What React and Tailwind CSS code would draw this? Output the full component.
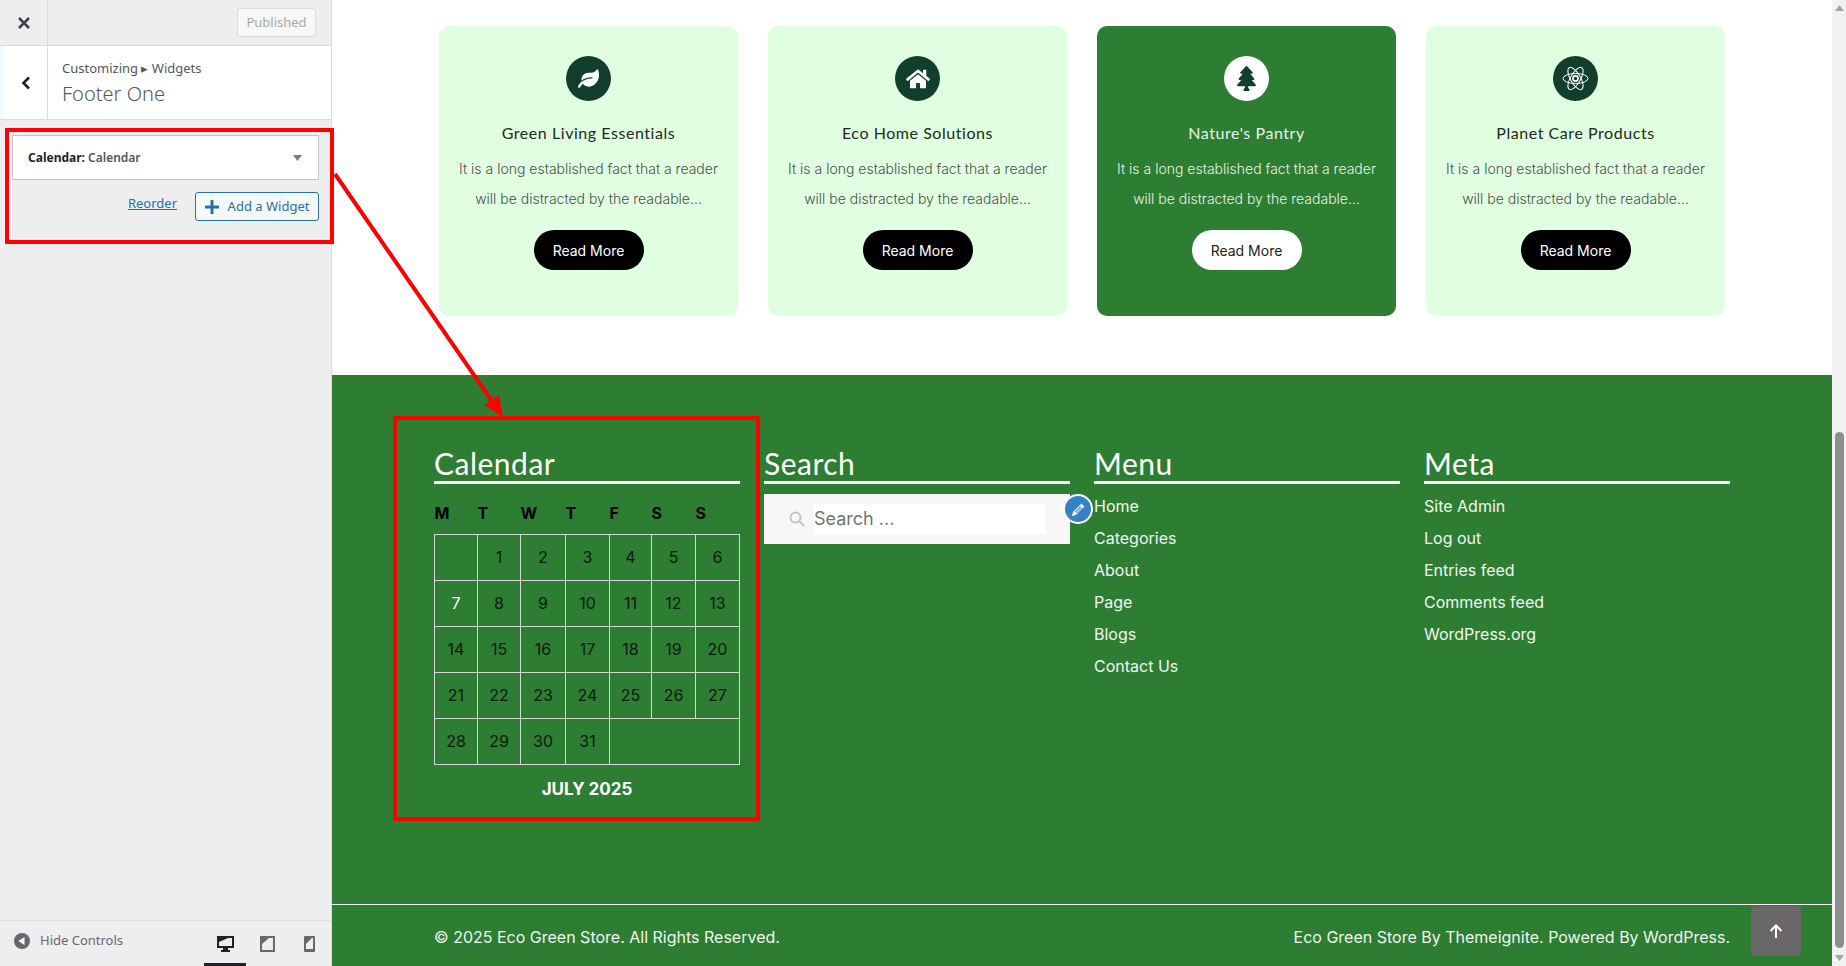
import React from "react";
import { FaLeaf, FaHome, FaTree } from "react-icons/fa";

const cards = [
  { title: "Green Living Essentials", icon: <FaLeaf className="text-white text-[21px]" /> },
  { title: "Eco Home Solutions", icon: <FaHome className="text-white text-[24px]" /> },
  { title: "Nature's Pantry", dark: true, icon: <FaTree className="text-[#123f2d] text-[25px]" /> },
  {
    title: "Planet Care Products",
    icon: (
      <svg width="27" height="27" viewBox="0 0 27 27" fill="none" stroke="white" strokeWidth="1">
        <ellipse cx="13.5" cy="13.5" rx="12.5" ry="5" />
        <ellipse cx="13.5" cy="13.5" rx="12.5" ry="5" transform="rotate(60 13.5 13.5)" />
        <ellipse cx="13.5" cy="13.5" rx="12.5" ry="5" transform="rotate(120 13.5 13.5)" />
        <circle cx="13.5" cy="13.5" r="2.6" strokeWidth="1.6" />
      </svg>
    ),
  },
];

const weeks = [
  [null, 1, 2, 3, 4, 5, 6],
  [7, 8, 9, 10, 11, 12, 13],
  [14, 15, 16, 17, 18, 19, 20],
  [21, 22, 23, 24, 25, 26, 27],
];
const colWidths = [43, 43, 45, 44, 42, 44, 44];
const dayNames = ["M", "T", "W", "T", "F", "S", "S"];

function Card({ title, icon, dark }) {
  return (
    <div className={`w-[299px] h-[290px] rounded-[10px] pt-[30px] flex flex-col items-center ${dark ? "bg-[#2d7d32]" : "bg-[#e0ffe0]"}`}>
      <div className={`w-[45px] h-[45px] rounded-full flex items-center justify-center ${dark ? "bg-white" : "bg-[#123f2d]"}`}>{icon}</div>
      <h3 className={`mt-[21px] text-[16px] leading-[22px] tracking-[0.55px] font-['Lato',sans-serif] ${dark ? "text-[#e6f5e6]" : "text-[#1d2a20]"}`}>{title}</h3>
      <p className={`mt-[10px] text-center text-[14px] leading-[30px] font-light ${dark ? "text-[#e6f5e6]" : "text-[#4a4f4b]"}`}>
        It is a long established fact that a reader
        <br />
        will be distracted by the readable...
      </p>
      <a className={`mt-[16px] w-[110px] h-[40px] rounded-full flex items-center justify-center text-[14px] ${dark ? "bg-white text-[#222]" : "bg-black text-white"}`}>Read More</a>
    </div>
  );
}

function WidgetTitle({ children }) {
  return (
    <h2 className="h-[39px] leading-[36px] border-b-[3px] border-white text-[30px] tracking-[0.5px] text-white font-['Lato',sans-serif] font-normal">{children}</h2>
  );
}

function LinkList({ items }) {
  return (
    <ul className="mt-[6px]">
      {items.map((t) => (
        <li key={t} className="h-[32px] leading-[32px] text-[16px] text-[#f1f7f1]">{t}</li>
      ))}
    </ul>
  );
}

function Sidebar() {
  return (
    <aside className="relative z-10 w-[332px] shrink-0 h-full flex flex-col bg-[#eeeeee] border-r border-[#dcdcde] font-['Noto_Sans',sans-serif]">
      <div className="h-[46px] flex items-stretch border-b border-[#dcdcde]">
        <div className="w-[48px] border-r border-[#dcdcde] flex items-center justify-center">
          <svg width="12" height="12" viewBox="0 0 12 12" stroke="#3c434a" strokeWidth="2.6">
            <path d="M1 1l10 10M11 1L1 11" />
          </svg>
        </div>
        <div className="flex-1 flex items-center justify-end pr-[15px]">
          <div className="w-[79px] h-[29px] border border-[#dcdcde] rounded-[3px] bg-[#f6f7f7] text-[#a7aaad] text-[13px] flex items-center justify-center">Published</div>
        </div>
      </div>
      <div className="h-[74px] flex bg-white border-b border-[#dcdcde]">
        <div className="w-[48px] border-r border-[#dcdcde] border-l-[4px] border-l-[#f0f9ff] flex items-center justify-center">
          <svg width="10" height="14" viewBox="0 0 10 14" fill="none" stroke="#1d2327" strokeWidth="2.6">
            <path d="M8 1.5L2.5 7 8 12.5" />
          </svg>
        </div>
        <div className="pl-[14px] pt-[12px]">
          <div className="text-[13px] leading-[20px] text-[#50575e]">Customizing ▸ Widgets</div>
          <div className="mt-[2px] text-[20px] leading-[28px] font-light text-[#50575e]">Footer One</div>
        </div>
      </div>
      <div className="mt-[8px] ml-[5px] w-[329px] h-[116px] border-[4px] border-[#ff0000] pt-[3px] pl-[3px]">
        <div className="w-[307px] h-[45px] bg-white border border-[#c3c4c7] flex items-center justify-between pl-[15px] pr-[16px] text-[12px]">
          <span className="text-[#50575e] font-semibold">
            <span className="text-[#1d2327] font-bold">Calendar:</span> Calendar
          </span>
          <svg width="9" height="6" viewBox="0 0 9 6" fill="#787c82"><path d="M0 0h9L4.5 6z" /></svg>
        </div>
        <div className="w-[307px] mt-[12px] flex justify-end items-start gap-[18px]">
          <a className="mt-[1px] text-[13px] leading-[20px] text-[#2271b1] underline">Reorder</a>
          <div className="w-[124px] h-[29px] rounded-[3px] border border-[#2271b1] bg-[#f6f7f7] text-[#2271b1] text-[13px] flex items-center justify-center gap-[9px]">
            <svg width="14" height="14" viewBox="0 0 14 14" fill="#2271b1"><path d="M5.5 0h3v5.5H14v3H8.500V14h-3V8.500H0v-3h5.500z" /></svg>
            Add a Widget
          </div>
        </div>
      </div>
      <div className="mt-auto h-[46px] border-t border-[#dcdcde] flex items-start">
        <div className="flex items-center pl-[14px] pt-[10px] gap-[10px] text-[13px] text-[#646970]">
          <svg width="16" height="16" viewBox="0 0 16 16"><circle cx="8" cy="8" r="8" fill="#646970" /><path d="M10.500 4v8L4.500 8z" fill="white" /></svg>
          Hide Controls
        </div>
        <div className="ml-auto mr-[1px] flex">
          <div className="w-[42px] h-[45px] border-b-[3px] border-[#1d2327] flex items-center justify-center pt-[3px]">
            <svg width="17" height="16" viewBox="0 0 17 16" fill="#1d2327">
              <path fillRule="evenodd" d="M0 0h17v12h-6v2h2v2H4v-2h2v-2H0zM2 2v8h13V2z" />
              <path d="M2 2h9L2 6z" />
            </svg>
          </div>
          <div className="w-[42px] h-[45px] flex items-center justify-center">
            <svg width="15" height="16" viewBox="0 0 15 16" fill="#646970">
              <path fillRule="evenodd" d="M0 0h15v16H0zM2 2v12h11V2z" />
              <path d="M2 2h7L2 8z" />
            </svg>
          </div>
          <div className="w-[42px] h-[45px] flex items-center justify-center">
            <svg width="11" height="16" viewBox="0 0 11 16" fill="#646970">
              <path fillRule="evenodd" d="M1 0h9a1 1 0 011 1v14a1 1 0 01-1 1H1a1 1 0 01-1-1V1a1 1 0 011-1zM2 2v11h7V2z" />
              <path d="M2 2h6L2 8z" />
            </svg>
          </div>
        </div>
      </div>
    </aside>
  );
}

function CalendarWidget() {
  return (
    <div className="relative w-[306px]">
      <div className="absolute left-[-41px] top-[-29px] w-[367px] h-[405px] border-[4px] border-[#ff0000] pointer-events-none"></div>
      <WidgetTitle>Calendar</WidgetTitle>
      <table className="mt-[14px] w-[306px] table-fixed border-collapse text-[16px] text-[#0b1a0e]">
        <thead>
          <tr className="h-[36px]">
            {dayNames.map((d, i) => (
              <th key={i} style={{ width: colWidths[i] }} className="p-0 pb-[6px] text-left font-bold text-[16px] text-black">{d}</th>
            ))}
          </tr>
        </thead>
        <tbody>
          {weeks.map((w, i) => (
            <tr key={i} className="h-[46px]">
              {w.map((n, j) => (
                <td key={j} className={`p-0 border border-[#d6d6d6] text-center ${n === 7 ? "text-white" : ""}`}>{n}</td>
              ))}
            </tr>
          ))}
          <tr className="h-[46px]">
            {[28, 29, 30, 31].map((n) => (
              <td key={n} className="p-0 border border-[#d6d6d6] text-center">{n}</td>
            ))}
            <td colSpan={3} className="p-0 border border-[#d6d6d6]"></td>
          </tr>
        </tbody>
        <caption className="caption-bottom pt-[12px] leading-[24px] text-[17px] font-bold text-white">JULY 2025</caption>
      </table>
    </div>
  );
}

function SearchWidget() {
  return (
    <div className="relative w-[306px]">
      <WidgetTitle>Search</WidgetTitle>
      <div className="mt-[10px] h-[50px] bg-[#f7f7f7] flex items-center pl-[25px]">
        <svg width="16" height="16" viewBox="0 0 16 16" fill="none" stroke="#c4c4c4" strokeWidth="2">
          <circle cx="6.500" cy="6.500" r="5" />
          <path d="M10.500 10.500L15 15" />
        </svg>
        <div className="ml-[9px] w-[231px] h-[30px] bg-white text-[18px] leading-[30px] text-[#757575]">Search ...</div>
      </div>
      <div className="absolute left-[299px] top-[49px] w-[30px] h-[30px] rounded-full bg-[#3582c4] border-[2px] border-white flex items-center justify-center">
        <svg width="15" height="15" viewBox="0 0 15 15" fill="white">
          <path d="M10.500 1.500l3 3-8.500 8.500-4 1 1-4zM9.300 4.300l-5.500 5.500 .8 .8 5.500-5.500zM10.700 5.700l-5.500 5.500 .8 .4 5.300-5.300z" fillRule="evenodd" />
        </svg>
      </div>
    </div>
  );
}

export default function App() {
  return (
    <div className="relative w-[1846px] h-[966px] overflow-hidden flex bg-white font-['Inter',sans-serif]">
      <Sidebar />
      <main className="relative w-[1500px] shrink-0 h-full flex flex-col">
        <section className="h-[375px] shrink-0 pt-[26px] flex justify-center gap-[30px]">
          {cards.map((c) => (
            <Card key={c.title} {...c} />
          ))}
        </section>
        <footer className="flex-1 flex flex-col bg-[#2d7d32]">
          <div className="flex-1 pt-[70px] flex justify-center gap-[24px]">
            <CalendarWidget />
            <SearchWidget />
            <div className="w-[306px]">
              <WidgetTitle>Menu</WidgetTitle>
              <LinkList items={["Home", "Categories", "About", "Page", "Blogs", "Contact Us"]} />
            </div>
            <div className="w-[306px]">
              <WidgetTitle>Meta</WidgetTitle>
              <LinkList items={["Site Admin", "Log out", "Entries feed", "Comments feed", "WordPress.org"]} />
            </div>
          </div>
          <div className="h-[62px] shrink-0 border-t border-white pl-[102px] pr-[102px] pt-[16px] flex justify-between text-[16px] leading-[32px] text-[#eef6ee]">
            <span>© 2025 Eco Green Store. All Rights Reserved.</span>
            <span>Eco Green Store By Themeignite. Powered By WordPress.</span>
          </div>
        </footer>
        <div className="absolute right-[31px] bottom-[10px] w-[50px] h-[50px] rounded-[4px] bg-[#696767] flex items-center justify-center">
          <svg width="14" height="14" viewBox="0 0 14 14" fill="none" stroke="white" strokeWidth="2">
            <path d="M7 14V1.500M1.500 7L7 1.500 12.500 7" />
          </svg>
        </div>
      </main>
      <div className="w-[14px] shrink-0 h-full bg-[#f1f1f1] flex flex-col items-center">
        <svg className="mt-[5px]" width="9" height="6" viewBox="0 0 9 6" fill="#a3a3a3"><path d="M4.500 0L9 6H0z" /></svg>
        <div className="mt-[421px] w-[9px] h-[516px] rounded-[5px] bg-[#8f8f8f]"></div>
        <svg className="mt-[7px]" width="9" height="6" viewBox="0 0 9 6" fill="#a3a3a3"><path d="M0 0h9L4.500 6z" /></svg>
      </div>
      <svg className="absolute left-0 top-0 z-20 pointer-events-none" width="1846" height="966" fill="none">
        <path d="M335 174L494 404" stroke="#ff0000" strokeWidth="4" />
        <path d="M503 417L484 405L499 395z" fill="#ff0000" />
      </svg>
    </div>
  );
}
